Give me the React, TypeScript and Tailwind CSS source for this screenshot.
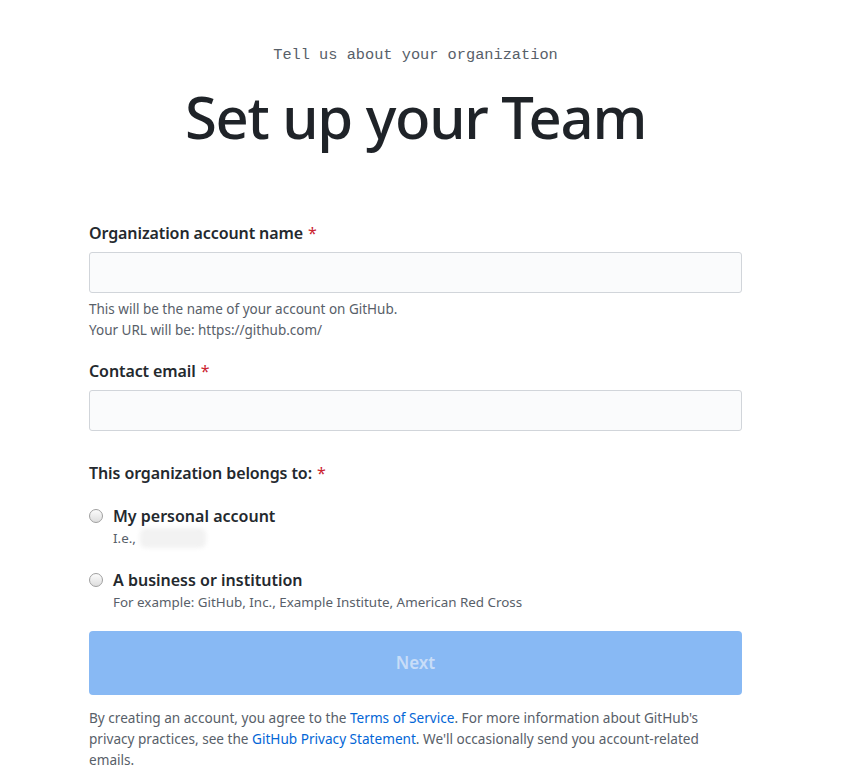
import React from 'react'

const sans = { fontFamily: '"Noto Sans", "Open Sans", sans-serif' }

function Req() {
  return <span className="ml-[5px] font-normal text-[#cb2431]">*</span>
}

function Radio() {
  return (
    <span className="mt-[5px] h-[14px] w-[14px] shrink-0 rounded-full border border-[#a0a0a0] bg-gradient-to-b from-[#fcfcfc] to-[#dedede]" />
  )
}

function App() {
  return (
    <div className="min-h-screen bg-white text-[#24292e]" style={sans}>
      <div className="ml-[89px] w-[653px] pt-[44px]">
        <p className="text-center font-['Liberation_Mono',monospace] text-[15.3px] text-[#586069]">
          Tell us about your organization
        </p>
        <h1 className="mt-[14px] text-center text-[58px] font-medium leading-[72px] tracking-[-1.3px] text-[#1f2328]">
          Set up your Team
        </h1>

        <form className="mt-[68px]">
          <label className="block text-[16px] font-semibold leading-[24px] tracking-[-0.1px]">
            Organization account name
            <Req />
          </label>
          <input
            type="text"
            className="mt-[7px] block h-[41px] w-full rounded-[3px] border border-[#d1d5da] bg-[#fafbfc]"
          />
          <p className="mt-[6px] text-[13.5px] leading-[21px] text-[#586069]">
            This will be the name of your account on GitHub.
            <br />
            Your URL will be: https://github.com/
          </p>

          <label className="mt-[18px] block text-[16px] font-semibold leading-[24px] tracking-[-0.1px]">
            Contact email
            <Req />
          </label>
          <input
            type="text"
            className="mt-[7px] block h-[41px] w-full rounded-[3px] border border-[#d1d5da] bg-[#fafbfc]"
          />

          <p className="mt-[30px] text-[16px] font-semibold leading-[24px] tracking-[-0.1px]">
            This organization belongs to:
            <Req />
          </p>

          <div className="mt-[19px] flex items-start gap-[10px]">
            <Radio />
            <div>
              <p className="text-[16px] font-semibold leading-[24px]">My personal account</p>
              <p className="flex items-center text-[13.4px] leading-[20px] text-[#586069]">
                I.e.,
                <span className="ml-[4px] inline-block h-[20px] w-[66px] rounded-[6px] bg-[#f2f2f2] blur-[2px]" />
              </p>
            </div>
          </div>

          <div className="mt-[20px] flex items-start gap-[10px]">
            <Radio />
            <div>
              <p className="text-[16px] font-semibold leading-[24px]">A business or institution</p>
              <p className="text-[13.4px] leading-[20px] text-[#586069]">
                For example: GitHub, Inc., Example Institute, American Red Cross
              </p>
            </div>
          </div>

          <button
            type="button"
            className="mt-[19px] block h-[64px] w-full rounded-[4px] bg-[#88b9f4] text-[17px] font-semibold text-[#c8ddf8]"
          >
            Next
          </button>

          <p className="mt-[12px] pr-[30px] text-[13.6px] leading-[21px] text-[#586069]">
            By creating an account, you agree to the{' '}
            <a className="text-[#0366d6]">Terms of Service</a>. For more information about GitHub's
            privacy practices, see the <a className="text-[#0366d6]">GitHub Privacy Statement</a>.
            We'll occasionally send you account-related emails.
          </p>
        </form>
      </div>
    </div>
  )
}

export default App
